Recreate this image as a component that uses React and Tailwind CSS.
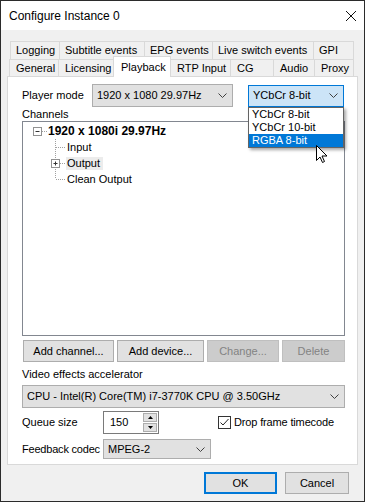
import React from 'react';

const row1Tabs = [
  { label: 'Logging', w: 'w-[49px]' },
  { label: 'Subtitle events', w: 'w-[85px]' },
  { label: 'EPG events', w: 'w-[68px]' },
  { label: 'Live switch events', w: 'w-[101px]' },
  { label: 'GPI', w: 'w-[41px]' },
];

const row2Tabs = [
  { label: 'General', w: 'w-[49px]' },
  { label: 'Licensing', w: 'w-[55px]' },
  { label: 'Playback', w: 'w-[58px]', active: true },
  { label: 'RTP Input', w: 'w-[59px]' },
  { label: 'CG', w: 'w-[43px]' },
  { label: 'Audio', w: 'w-[41px]' },
  { label: 'Proxy', w: 'w-[40px]' },
];

function Chevron() {
  return (
    <svg width="9" height="5" viewBox="0 0 9 5" className="shrink-0">
      <path d="M0.5 0.5 L4.5 4.5 L8.5 0.5" fill="none" stroke="#404040" strokeWidth="1" />
    </svg>
  );
}

function Combo({ className, children, focused }) {
  return (
    <div
      className={`flex items-center justify-between pl-[4px] pr-[5px] border ${
        focused ? 'border-[#0078d7] bg-[#cce4f7]' : 'border-[#adadad] bg-[#e1e1e1]'
      } ${className}`}
    >
      <span className="whitespace-nowrap">{children}</span>
      <Chevron />
    </div>
  );
}

function Button({ className, children, disabled, primary }) {
  return (
    <div
      className={`flex items-center justify-center ${
        disabled
          ? 'bg-[#cccccc] border border-[#bfbfbf] text-[#838383]'
          : primary
          ? 'bg-[#e1e1e1] border-2 border-[#0078d7]'
          : 'bg-[#e1e1e1] border border-[#adadad]'
      } ${className}`}
    >
      {children}
    </div>
  );
}

function Connector({ top = true, bottom = true, plus }) {
  return (
    <svg width="20" height="16" viewBox="0 0 20 16" className="shrink-0">
      <line
        x1="9.5"
        y1={top ? 0 : 8}
        x2="9.5"
        y2={bottom ? 16 : 8}
        stroke="#a0a0a0"
        strokeDasharray="1 1"
      />
      <line x1="10" y1="8.5" x2="19" y2="8.5" stroke="#a0a0a0" strokeDasharray="1 1" />
      {plus && (
        <g>
          <rect x="5.5" y="4.5" width="8" height="8" fill="#fff" stroke="#919191" />
          <line x1="7.5" y1="8.5" x2="11.5" y2="8.5" stroke="#333" />
          <line x1="9.5" y1="6.5" x2="9.5" y2="10.5" stroke="#333" />
        </g>
      )}
    </svg>
  );
}

export default function App() {
  return (
    <div className="w-[366px] h-[503px] bg-white font-['Segoe_UI','Liberation_Sans',Arial,sans-serif] text-[11px] text-black leading-none">
      <div className="w-[365px] h-[502px] border border-[#2b2b2b] flex flex-col bg-[#f0f0f0]">
        {/* title bar */}
        <div className="h-[29px] bg-white flex items-center justify-between pl-[8px] pr-[7px] shrink-0">
          <span className="text-[12px]">Configure Instance 0</span>
          <svg width="12" height="12" viewBox="0 0 12 12">
            <path d="M1 1 L11 11 M11 1 L1 11" stroke="#111" strokeWidth="1" />
          </svg>
        </div>

        <div className="pt-[11px] flex flex-col">
          {/* tab rows */}
          <div className="flex ml-[9px] h-[18px]">
            {row1Tabs.map((t, i) => (
              <div
                key={t.label}
                className={`${t.w} flex items-center pl-[5px] border-t border-l border-[#d9d9d9] whitespace-nowrap ${
                  i === row1Tabs.length - 1 ? 'border-r' : ''
                }`}
              >
                {t.label}
              </div>
            ))}
          </div>
          <div className="flex items-end ml-[8px] h-[17px]">
            {row2Tabs.map((t, i) => (
              <div
                key={t.label}
                className={`${t.w} flex items-center whitespace-nowrap border-t border-[#d9d9d9] ${
                  t.active
                    ? 'h-[21px] -mb-px bg-white border-l border-r relative z-10 pl-[7px]'
                    : `h-[17px] pl-[6px] ${i === 3 ? '' : 'border-l'} ${i === row2Tabs.length - 1 ? 'border-r' : ''}`
                }`}
              >
                {t.label}
              </div>
            ))}
          </div>

          {/* panel */}
          <div className="ml-[6px] w-[351px] h-[389px] bg-white border border-[#d9d9d9] pl-[14px] pt-[7px] flex flex-col">
            <div className="flex items-center h-[23px]">
              <span className="w-[70px]">Player mode</span>
              <Combo className="w-[141px] h-[23px]">1920 x 1080 29.97Hz</Combo>
              <div className="relative ml-[15px] w-[96px] h-[22px]">
                <Combo focused className="w-[96px] h-[22px]">
                  YCbCr 8-bit
                </Combo>
                <div className="absolute left-0 top-[22px] w-[96px] h-[41px] bg-white border border-[#646464] shadow-[2px_2px_3px_rgba(0,0,0,0.35)] z-20 flex flex-col">
                  <div className="h-[13px] flex items-center pl-[3px]">YCbCr 8-bit</div>
                  <div className="h-[13px] flex items-center pl-[3px]">YCbCr 10-bit</div>
                  <div className="h-[13px] flex items-center pl-[3px] bg-[#0078d7] text-white">RGBA 8-bit</div>
                </div>
                <svg
                  width="13"
                  height="20"
                  viewBox="0 0 13 20"
                  className="absolute left-[68px] top-[60px] z-30"
                >
                  <path
                    d="M0.5 0.5 L0.5 15.5 L4 12 L6.5 17.5 L8.5 16.5 L6 11 L11 11 Z"
                    fill="#fff"
                    stroke="#000"
                    strokeWidth="1"
                    strokeLinejoin="miter"
                  />
                </svg>
              </div>
            </div>

            <div className="h-[13px] mt-px flex items-center">Channels</div>

            {/* tree */}
            <div className="w-[323px] h-[215px] border border-[#828790] bg-white pt-px">
              <div className="h-[16px] flex items-center pl-[10px]">
                <svg width="15" height="16" viewBox="0 0 15 16" className="shrink-0">
                  <rect x="0.5" y="4.5" width="8" height="8" fill="#fff" stroke="#919191" />
                  <line x1="2.5" y1="8.5" x2="6.5" y2="8.5" stroke="#333" />
                  <line x1="9" y1="8.5" x2="14" y2="8.5" stroke="#a0a0a0" strokeDasharray="1 1" />
                </svg>
                <span className="font-bold text-[12px]">1920 x 1080i 29.97Hz</span>
              </div>
              <div className="h-[16px] flex items-center pl-[23px]">
                <Connector />
                <span className="ml-[1px]">Input</span>
              </div>
              <div className="h-[16px] flex items-center pl-[23px]">
                <Connector plus />
                <span className="bg-[#ececec] h-[13px] flex items-center pl-[1px] pr-[3px]">Output</span>
              </div>
              <div className="h-[16px] flex items-center pl-[23px]">
                <Connector bottom={false} />
                <span className="ml-[1px]">Clean Output</span>
              </div>
            </div>

            {/* buttons */}
            <div className="flex mt-[4px] h-[22px]">
              <Button className="w-[91px] h-[22px] ml-px">Add channel...</Button>
              <Button className="w-[87px] h-[22px] ml-[3px]">Add device...</Button>
              <Button disabled className="w-[72px] h-[22px] ml-[3px]">
                Change...
              </Button>
              <Button disabled className="w-[63px] h-[22px] ml-[3px]">
                Delete
              </Button>
            </div>

            <div className="h-[14px] mt-[5px] flex items-center">Video effects accelerator</div>
            <Combo className="w-[323px] h-[23px] mt-[4px]">
              CPU - Intel(R) Core(TM) i7-3770K CPU @ 3.50GHz
            </Combo>

            {/* queue size */}
            <div className="flex items-center h-[23px] mt-[3px]">
              <span className="w-[81px]">Queue size</span>
              <div className="flex h-[23px] w-[56px] border border-[#7a7a7a] bg-white">
                <div className="flex-1 flex items-center pl-[6px]">150</div>
                <div className="w-[15px] flex flex-col gap-px py-px pr-px">
                  <div className="flex-1 bg-[#e1e1e1] border border-[#adadad] flex items-center justify-center">
                    <svg width="5" height="3" viewBox="0 0 5 3">
                      <path d="M0 3 L2.5 0 L5 3 Z" fill="#000" />
                    </svg>
                  </div>
                  <div className="flex-1 bg-[#e1e1e1] border border-[#adadad] flex items-center justify-center">
                    <svg width="5" height="3" viewBox="0 0 5 3">
                      <path d="M0 0 L2.5 3 L5 0 Z" fill="#000" />
                    </svg>
                  </div>
                </div>
              </div>
              <div className="flex items-center ml-[59px]">
                <div className="w-[13px] h-[13px] border border-[#333] bg-white flex items-center justify-center">
                  <svg width="11" height="11" viewBox="0 0 11 11">
                    <path d="M1.5 5.5 L4 8 L9.5 2" fill="none" stroke="#222" strokeWidth="1" />
                  </svg>
                </div>
                <span className="ml-[3px] tracking-[-0.15px]">Drop frame timecode</span>
              </div>
            </div>

            {/* feedback codec */}
            <div className="flex items-center h-[20px] mt-[5px]">
              <span className="w-[81px] tracking-[-0.2px] whitespace-nowrap">Feedback codec</span>
              <Combo className="w-[108px] h-[20px]">MPEG-2</Combo>
            </div>
          </div>

          {/* dialog buttons */}
          <div className="flex justify-end pr-[15px] mt-[7px]">
            <Button primary className="w-[73px] h-[22px]">
              OK
            </Button>
            <Button className="w-[64px] h-[22px] ml-[8px]">Cancel</Button>
          </div>
        </div>
      </div>
    </div>
  );
}
